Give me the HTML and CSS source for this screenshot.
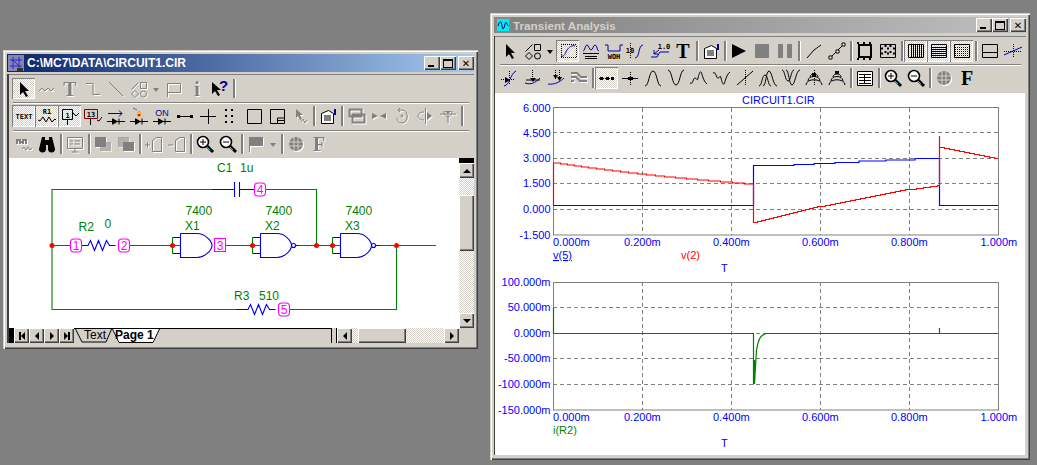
FILE: index.html
```html
<!DOCTYPE html>
<html lang="en">
<head>
<meta charset="utf-8">
<title>Micro-Cap</title>
<link rel="stylesheet" href="styles.css">
</head>
<body>
<svg class="defs" aria-hidden="true">
  <defs>
    <symbol id="arrow" viewBox="0 0 20 20"><path class="solid" d="M6 3v13l3-3 3 5 2-1-3-5h4z"/></symbol>
    <symbol id="shapes" viewBox="0 0 20 20"><path d="M2.500 10.500l7-7M2.500 15l3.500-3.500 3.500 3.500-3.500 3.500zM11.500 3.500h6v6h-6z"/><circle cx="14.500" cy="15" r="3"/></symbol>
    <symbol id="zoomin" viewBox="0 0 20 20"><path class="thick" d="M12 12l6 6"/><circle cx="8" cy="8" r="5.500" class="mid2" fill="#fff"/><path d="M5 8h6M8 5v6"/><path stroke="#0cc" d="M12 13l3 3"/></symbol>
    <symbol id="zoomout" viewBox="0 0 20 20"><path class="thick" d="M12 12l6 6"/><circle cx="8" cy="8" r="5.500" class="mid2" fill="#fff"/><path d="M5 8h6"/><path stroke="#0cc" d="M12 13l3 3"/></symbol>
    <symbol id="globe" viewBox="0 0 20 20"><circle cx="10" cy="10" r="7" class="solid"/><path stroke="#d4d0c8" d="M3 8h14M3 12h14M8 3v14M12 3v14"/></symbol>
    <symbol id="diode" viewBox="0 0 20 20"><path d="M1 15.500h18M6.500 12.500v6M13 12.500v6"/><path class="solid" d="M7 12.500l5 3-5 3z"/></symbol>
  </defs>
</svg>

<section class="win win-schem">
  <header class="title title-on">
    <svg class="tico" viewBox="0 0 16 16"><rect width="16" height="16" fill="#8a86a8"/><path stroke="#22f" fill="none" d="M2 5h12M5 2v12M11 2v12M2 11h12M5 5l6 6"/><rect x="9" y="13" width="6" height="3" fill="#333"/></svg>
    <span class="ttext">C:\MC7\DATA\CIRCUIT1.CIR</span>
    <span class="caps">
      <span class="cap"><i class="c-min"></i></span><span class="cap"><i class="c-max"></i></span><span class="cap cap-x">✕</span>
    </span>
  </header>
  <div class="client">
    <div class="toolbar">
      <div class="row row-first">
        <span class="btn on"><svg class="ic"><use href="#arrow"/></svg></span>
        <span class="btn off"><svg class="ic" viewBox="0 0 20 20"><path d="M2 12l3-3 3 3 3-3 3 3 3-3"/></svg></span>
        <span class="btn off"><svg class="ic" viewBox="0 0 20 20"><text x="10" y="17" class="bigT">T</text></svg></span>
        <span class="btn off"><svg class="ic" viewBox="0 0 20 20"><path d="M3 4.500h7v11h7"/></svg></span>
        <span class="btn off"><svg class="ic" viewBox="0 0 20 20"><path d="M3 3l14 14"/></svg></span>
        <span class="btn off"><svg class="ic"><use href="#shapes"/></svg></span>
        <span class="dd off"></span>
        <span class="btn off"><svg class="ic" viewBox="0 0 20 20"><path d="M3.500 18V4.500h13v9h-13"/></svg></span>
        <span class="btn off"><svg class="ic" viewBox="0 0 20 20"><text x="10" y="17" class="bigT">i</text></svg></span>
        <span class="btn"><svg class="ic" viewBox="0 0 20 20"><path class="solid" d="M2 3v12l3-3 3 5 2-1-3-5h4z"/><text x="9" y="12" class="help">?</text></svg></span>
        <span class="sep"></span>
      </div>
      <div class="rule"></div>
      <div class="row">
        <span class="btn on"><svg class="ic" viewBox="0 0 20 20"><text x="10" y="13" class="tiny">TEXT</text></svg></span>
        <span class="btn on"><svg class="ic" viewBox="0 0 20 20"><text x="10" y="8" class="tiny">R1</text><path d="M1 14l2 1 3-4 3 5 3-5 3 5 3-3 1 1"/></svg></span>
        <span class="btn on"><svg class="ic" viewBox="0 0 20 20"><path d="M2.500 3.500h10v10h-10zM7.500 14v5M13 7l3 3 3-3"/><text x="7.500" y="12" class="tiny">1</text></svg></span>
        <span class="btn"><svg class="ic" viewBox="0 0 20 20"><path stroke="#800000" d="M1.500 3.500h13v9h-13z"/><path d="M7.500 13v6M14 14l2 1 3-4"/><text x="8" y="11" class="tiny">13</text></svg></span>
        <span class="btn"><svg class="ic" viewBox="0 0 20 20"><path stroke="#008" d="M2 7.500h14M13 4.500l3 3-3 3"/><use href="#diode" width="20" height="20"/></svg></span>
        <span class="btn"><svg class="ic" viewBox="0 0 20 20"><use href="#diode" width="20" height="20"/><path fill="#ff0" stroke="#f80" d="M10 5c-3 4-1 6 0 6s3-2 0-6z"/><rect x="9" y="8" width="2" height="2" fill="#f00" stroke="none"/><path stroke="#666" d="M4 2l4 2"/></svg></span>
        <span class="btn"><svg class="ic" viewBox="0 0 20 20"><text x="10" y="10" class="on-t">ON</text><use href="#diode" width="20" height="20"/></svg></span>
        <span class="btn"><svg class="ic" viewBox="0 0 20 20"><path d="M3 10.500h14"/><path class="solid" d="M2 9h3v3H2zM15 9h3v3h-3z"/></svg></span>
        <span class="btn"><svg class="ic" viewBox="0 0 20 20"><path d="M2 10.500h16M10.500 3v15"/></svg></span>
        <span class="btn"><svg class="ic" viewBox="0 0 20 20"><path class="dots" d="M4 4h12M4 10h12M4 16h12"/></svg></span>
        <span class="btn"><svg class="ic" viewBox="0 0 20 20"><path d="M3.500 3.500h14v14h-14z"/></svg></span>
        <span class="btn"><svg class="ic" viewBox="0 0 20 20"><path d="M3.500 3.500h14v14h-14zM10.500 17v-5h7M10.500 14.500h7"/></svg></span>
        <span class="btn off"><svg class="ic" viewBox="0 0 20 20"><path class="solid" d="M6 3v9l2-2 2 4 2-1-2-4h3z"/><path d="M11 16l2-3 2 4 2-3"/></svg></span>
        <span class="sep"></span>
        <span class="btn"><svg class="ic" viewBox="0 0 20 20"><path fill="#fff" d="M3.500 7.500l7-3 5 3v10h-12z"/><path d="M6 10h7M6 12h7M6 14h7"/><path stroke="#008" class="mid" d="M17 3v6"/></svg></span>
        <span class="sep"></span>
        <span class="btn off"><svg class="ic" viewBox="0 0 20 20"><path class="mid" d="M3.500 3.500h12v7h-12zM6.500 8.500h12v8h-12z"/></svg></span>
        <span class="btn off"><svg class="ic" viewBox="0 0 20 20"><path class="solid" d="M3 7l6 3-6 3zM17 7l-6 3 6 3z"/></svg></span>
        <span class="btn off"><svg class="ic" viewBox="0 0 20 20"><path d="M6 4h4c7 0 7 13 0 13-4 0-5-3-5-5M8 2L6 4l2 2"/><circle cx="10" cy="10" r="1"/></svg></span>
        <span class="btn off"><svg class="ic" viewBox="0 0 20 20"><path d="M10.500 2v16M9 6c-8 0-8 8 0 8"/><path class="solid" d="M12 6l5 4-5 4z"/></svg></span>
        <span class="btn off"><svg class="ic" viewBox="0 0 20 20"><path d="M2 8h16M6 5c0 8 8 8 8 0M10 8v9"/><path class="solid" d="M7 5h6l-3 3z"/></svg></span>
        <span class="sep"></span>
      </div>
      <div class="rule"></div>
      <div class="row">
        <span class="btn off"><svg class="ic" viewBox="0 0 20 20"><path class="mid" d="M3 10V6h3v4M9 10V6h3v4M6 8h3"/><path d="M8 15l2-2 2 3 2-3 2 3 2-2"/></svg></span>
        <span class="btn"><svg class="ic" viewBox="0 0 20 20"><path class="solid" d="M5 3h3v3h4V3h3l3 12a3 3 0 0 1-7 0v-4H9v4a3 3 0 0 1-7 0z"/></svg></span>
        <span class="sep"></span>
        <span class="btn off"><svg class="ic" viewBox="0 0 20 20"><path d="M2.500 3.500h15v11h-15zM7 18h6M10 15v3M5 7h3M10 7h5M5 10h3M10 10h5"/></svg></span>
        <span class="sep"></span>
        <span class="btn off"><svg class="ic" viewBox="0 0 20 20"><path class="solid" d="M2 3h11v10H2z"/><path class="solid lt" d="M7 8h11v9H7z"/></svg></span>
        <span class="btn off"><svg class="ic" viewBox="0 0 20 20"><path class="solid lt" d="M2 3h11v10H2z"/><path class="solid" d="M7 8h11v9H7z"/></svg></span>
        <span class="sep"></span>
        <span class="btn off"><svg class="ic" viewBox="0 0 20 20"><path d="M1 11h5M3.500 8.500v5M8.500 17.500v-11l4-3h5v14z"/></svg></span>
        <span class="btn off"><svg class="ic" viewBox="0 0 20 20"><path d="M1 11h5M8.500 17.500v-11l4-3h5v14z"/></svg></span>
        <span class="sep"></span>
        <span class="btn"><svg class="ic"><use href="#zoomin"/></svg></span>
        <span class="btn"><svg class="ic"><use href="#zoomout"/></svg></span>
        <span class="sep"></span>
        <span class="btn off"><svg class="ic" viewBox="0 0 20 20"><path class="solid" d="M3 3h14v9H3z"/><path d="M3.500 3v15"/></svg></span>
        <span class="dd off"></span>
        <span class="sep"></span>
        <span class="btn off"><svg class="ic"><use href="#globe"/></svg></span>
        <span class="btn off"><svg class="ic" viewBox="0 0 20 20"><text x="10" y="17" class="bigT">F</text></svg></span>
      </div>
    </div>
    <div class="work">
      <svg class="canvas schem" viewBox="9 158 450 170">
        <g class="wire">
          <path d="M212 189.500H52V309.500H236M265 189.500H316.500V245.500M52 245.500H70M130 245.500H180M226 245.500H260M299 245.500H340M380 245.500H436M290 309.500H396.500V245.500"/>
          <path d="M172.500 237.500V253.500M252.500 237.500V253.500M332.500 237.500V253.500"/>
        </g>
        <g class="part">
          <path d="M212 189.500H234.500M234.500 182V197M239.500 182V197M239.500 189.500H254"/>
          <path d="M82 245.500H88l2.500-5 4 10 4-10 4 10 4-10 3 5h6"/>
          <path d="M236 309.500H248l2.500-5 4 10 4-10 4 10 4-10 3 5h6"/>
          <path d="M172.500 237.500H180M172.500 253.500H180M180.500 233.500V257.500H197C205 257.500 212 250 212 245.500 212 241 205 233.500 197 233.500H180.500"/>
          <path d="M252.500 237.500H260M252.500 253.500H260M260.500 233.500V257.500H277C285 257.500 291.500 250 291.500 245.500 291.500 241 285 233.500 277 233.500H260.500M295.500 245.500H299"/>
          <circle cx="293.500" cy="245.500" r="2"/>
          <path d="M332.500 237.500H340M332.500 253.500H340M340.500 233.500V257.500H357C365 257.500 371.500 250 371.500 245.500 371.500 241 365 233.500 357 233.500H340.500M375.500 245.500H380"/>
          <circle cx="373.500" cy="245.500" r="2"/>
        </g>
        <g class="dot">
          <circle cx="52" cy="245.500" r="2.500"/><circle cx="172.500" cy="245.500" r="2.500"/><circle cx="252.500" cy="245.500" r="2.500"/><circle cx="316.500" cy="245.500" r="2.500"/><circle cx="332.500" cy="245.500" r="2.500"/><circle cx="396.500" cy="245.500" r="2.500"/>
        </g>
        <g class="node">
          <rect x="70.500" y="239" width="11" height="13" rx="3.500"/><rect x="118.500" y="239" width="11" height="13" rx="3.500"/><rect x="214.500" y="238.500" width="11" height="13"/><rect x="254.500" y="183" width="11" height="13" rx="3.500"/><rect x="278.500" y="303" width="11" height="13" rx="3.500"/>
          <text x="76" y="250">1</text><text x="124" y="250">2</text><text x="220" y="250">3</text><text x="260" y="194">4</text><text x="284" y="314">5</text>
        </g>
        <g class="lab">
          <text x="217" y="172">C1</text><text x="240" y="172">1u</text>
          <text x="78.500" y="231">R2</text><text x="104.500" y="228">0</text>
          <text x="185.500" y="215">7400</text><text x="185" y="230">X1</text>
          <text x="265.500" y="215">7400</text><text x="265" y="230">X2</text>
          <text x="345.500" y="215">7400</text><text x="345" y="230">X3</text>
          <text x="234" y="300">R3</text><text x="259" y="300">510</text>
        </g>
      </svg>
      <div class="vbar">
        <div class="vcap"></div>
        <span class="sb-btn"><i class="tri tri-up"></i></span>
        <div class="track t1"></div>
        <div class="thumb th-v"></div>
        <div class="track grow"></div>
        <span class="sb-btn"><i class="tri tri-dn"></i></span>
      </div>
    </div>
    <div class="tabbar">
      <span class="blk"></span>
      <span class="nav"><i class="bar"></i><i class="tri tri-lt"></i></span>
      <span class="nav"><i class="tri tri-lt"></i></span>
      <span class="nav"><i class="tri tri-rt"></i></span>
      <span class="nav"><i class="tri tri-rt"></i><i class="bar"></i></span>
      <svg class="tabs" viewBox="0 0 100 15">
        <path class="tab-w" d="M38 0L45 14.500H79L86 0z"/>
        <path class="tab-l" d="M1 0L8 14H32L38 0"/>
        <text x="10" y="11" class="tab-t">Text</text>
        <text x="41" y="11" class="tab-b">Page 1</text>
        <path class="tab-l" d="M0 .5H100"/>
      </svg>
      <span class="tabfill"></span>
      <span class="split"></span>
      <span class="sb-btn"><i class="tri tri-lt"></i></span>
      <span class="track t2"></span>
      <span class="thumb th-h"></span>
      <span class="track grow"></span>
      <span class="sb-btn"><i class="tri tri-rt"></i></span>
      <span class="corner"></span>
    </div>
  </div>
</section>

<section class="win win-plot">
  <header class="title title-off">
    <svg class="tico" viewBox="0 0 16 16"><rect width="16" height="16" fill="#888"/><rect x="2" y="2" width="12" height="12" fill="#0ee"/><path stroke="#008" fill="none" d="M3 9c2-6 3-6 4 0s2 2 3-2 2 0 3 2"/></svg>
    <span class="ttext">Transient Analysis</span>
    <span class="caps">
      <span class="cap"><i class="c-min"></i></span><span class="cap"><i class="c-max"></i></span><span class="cap cap-x">✕</span>
    </span>
  </header>
  <div class="client client-plot">
    <div class="toolbar tb-plot">
      <div class="row">
        <span class="btn"><svg class="ic"><use href="#arrow"/></svg></span>
        <span class="btn"><svg class="ic"><use href="#shapes"/></svg></span>
        <span class="dd"></span>
        <span class="btn on"><svg class="ic" viewBox="0 0 20 20"><path class="dash" d="M3 3.500h15v13H3z"/><path stroke="#00a" d="M3 15c4 1 4-3 6-6s5-5 8-4"/></svg></span>
        <span class="btn"><svg class="ic" viewBox="0 0 20 20"><path stroke="#00a" d="M2 10c2 0 2-6 4-6s2 5 4 5 2-5 4-5 2 6 4 6"/><path d="M2 12.500h16M4 15.500h12M4 17.500h12"/></svg></span>
        <span class="btn"><svg class="ic" viewBox="0 0 20 20"><path stroke="#00a" d="M1 4h3v6h12V4h3"/><text x="10" y="18" class="tiny">WOH</text></svg></span>
        <span class="btn"><svg class="ic" viewBox="0 0 20 20"><path stroke="#00a" d="M8 17c5 0 3-13 8-13"/><path class="dash" d="M3.500 2v16"/><text x="3" y="12" class="tiny">10</text></svg></span>
        <span class="btn"><svg class="ic" viewBox="0 0 20 20"><path stroke="#00a" d="M1 16h6l3-5h9"/><path stroke="#00a" d="M4 13l5-4M4 9v4h4"/><text x="14" y="8" class="tiny">1.0</text></svg></span>
        <span class="btn"><svg class="ic" viewBox="0 0 20 20"><text x="10" y="17" class="bigT">T</text></svg></span>
        <span class="sep"></span>
        <span class="btn"><svg class="ic" viewBox="0 0 20 20"><path fill="#fff" d="M3.500 7.500l7-3 5 3v10h-12z"/><path d="M6 10h7M6 12h7M6 14h7"/><path stroke="#008" class="mid" d="M17 3v6"/></svg></span>
        <span class="sep"></span>
        <span class="btn"><svg class="ic" viewBox="0 0 20 20"><path class="solid" d="M3 3l14 7-14 7z"/></svg></span>
        <span class="btn dim"><svg class="ic" viewBox="0 0 20 20"><rect x="3" y="3" width="14" height="14" class="dimfill"/></svg></span>
        <span class="btn dim"><svg class="ic" viewBox="0 0 20 20"><path class="dimfill" d="M3 3h5v14H3zM12 3h5v14h-5z"/></svg></span>
        <span class="sep sep-w"></span>
        <span class="btn"><svg class="ic" viewBox="0 0 20 20"><path d="M3 17L10 9l7-5"/></svg></span>
        <span class="btn"><svg class="ic" viewBox="0 0 20 20"><path d="M3 17L10 10l7-7"/><path fill="#fff" d="M2 15h3v3H2zM9 9h3v3H9zM15 2h3v3h-3z"/></svg></span>
        <span class="sep"></span>
        <span class="btn"><svg class="ic" viewBox="0 0 20 20"><path class="mid" d="M4 4h12v12H4z"/><path class="dots" d="M2 2h16M2 18h16"/></svg></span>
        <span class="btn"><svg class="ic" viewBox="0 0 20 20"><path d="M2.500 3.500h15v13h-15z"/><path class="dots" d="M3 7.500h14M3 12.500h14M7.500 4v12M12.500 4v12"/></svg></span>
        <span class="sep"></span>
        <span class="btn on"><svg class="ic" viewBox="0 0 20 20"><path d="M2.500 3.500h15v13h-15zM5.500 4v12M7.500 4v12M9.500 4v12M11.500 4v12M13.500 4v12M15.500 4v12"/></svg></span>
        <span class="btn on"><svg class="ic" viewBox="0 0 20 20"><path d="M2.500 3.500h15v13h-15zM3 6.500h14M3 8.500h14M3 10.500h14M3 12.500h14M3 14.500h14"/></svg></span>
        <span class="btn on"><svg class="ic" viewBox="0 0 20 20"><path d="M2.500 3.500h15v13h-15z"/><path class="dash" d="M3 6h14M3 8h14M3 10h14M3 12h14M3 14h14"/></svg></span>
        <span class="sep"></span>
        <span class="btn"><svg class="ic" viewBox="0 0 20 20"><path d="M2.500 3.500h15v13h-15zM3 11.500h14"/></svg></span>
        <span class="btn"><svg class="ic" viewBox="0 0 20 20"><path stroke="#00a" d="M1 14l18-8"/><path class="dash" d="M1 10.500h18M10.500 3v14"/></svg></span>
      </div>
      <div class="rule"></div>
      <div class="row">
        <span class="btn"><svg class="ic" viewBox="0 0 20 20"><path class="dash" d="M1 11.500h13M9.500 3v14"/><path stroke="#00a" d="M4 18c6-1 6-12 12-15"/><path class="solid" d="M5 9l5 3-5 3z"/></svg></span>
        <span class="btn"><svg class="ic" viewBox="0 0 20 20"><path class="dash" d="M9.500 2v8"/><path stroke="#00a" d="M2 15c6 2 10 0 15-5"/><path d="M3 12h14"/><path class="solid" d="M7 10h6l-3 4z"/></svg></span>
        <span class="btn"><svg class="ic" viewBox="0 0 20 20"><path class="dash" d="M9.500 2v9M13.500 2v9"/><path stroke="#00a" d="M2 16c6 1 12-2 16-6"/><path class="solid" d="M7 7h5l-2.500 4zM11 9h5l-2.500 4z"/></svg></span>
        <span class="btn off"><svg class="ic" viewBox="0 0 20 20"><path class="mid" d="M2 5h6l4 4h6M2 9h5l4 4h7M2 13h3"/></svg></span>
        <span class="sep"></span>
        <span class="btn on"><svg class="ic" viewBox="0 0 20 20"><path class="dash" d="M2 10.500h16"/><path class="solid" d="M3 9h3v3H3zM9 9h3v3H9zM14 9h3v3h-3z"/></svg></span>
        <span class="btn"><svg class="ic" viewBox="0 0 20 20"><path d="M2 10.500h16"/><path class="dash" d="M10.500 4v14"/><path class="solid" d="M8 9h5v3H8z"/></svg></span>
        <span class="btn"><svg class="ic" viewBox="0 0 20 20"><path d="M2 18C6 18 6 3 10 3s4 15 8 15"/></svg></span>
        <span class="btn"><svg class="ic" viewBox="0 0 20 20"><path d="M2 2C6 2 6 17 10 17s4-15 8-15"/></svg></span>
        <span class="btn"><svg class="ic" viewBox="0 0 20 20"><path d="M1 15c3 2 3-5 5-5s2 4 3 0 2-7 3-6 2 9 6 12"/></svg></span>
        <span class="btn"><svg class="ic" viewBox="0 0 20 20"><path d="M1 5c3-2 3 5 5 5s2-4 3 0 2 7 3 6 2-9 6-12"/></svg></span>
        <span class="btn"><svg class="ic" viewBox="0 0 20 20"><path class="dash" d="M10.500 2v16"/><path d="M2 17L18 3"/></svg></span>
        <span class="btn"><svg class="ic" viewBox="0 0 20 20"><path d="M1 18C4 18 4 7 7 7s3 11 6 11M5 18C8 18 8 3 11 3s4 15 8 15"/></svg></span>
        <span class="btn"><svg class="ic" viewBox="0 0 20 20"><path d="M1 2C4 2 4 13 7 13s3-11 6-11M5 2C8 2 8 17 11 17s4-15 8-15"/></svg></span>
        <span class="btn"><svg class="ic" viewBox="0 0 20 20"><path d="M2 17C2 10 18 10 18 17M4 13C4 7 16 7 16 13M6 9c0-4 8-4 8 0"/><path class="solid" d="M8 5h4v4H8z"/><path class="dash" d="M10.500 2v16"/></svg></span>
        <span class="btn"><svg class="ic" viewBox="0 0 20 20"><path d="M2 17C2 10 18 10 18 17M4 13C4 7 16 7 16 13M6 9c0-4 8-4 8 0"/><path class="solid" d="M8 3h4v3H8z"/></svg></span>
        <span class="sep"></span>
        <span class="btn"><svg class="ic" viewBox="0 0 20 20"><path fill="#fff" d="M2.500 3.500h15v14h-15z"/><path d="M4 6.500h12M4 9.500h12M4 12.500h12M4 15.500h12M9.500 6v10"/></svg></span>
        <span class="sep"></span>
        <span class="btn"><svg class="ic"><use href="#zoomin"/></svg></span>
        <span class="btn"><svg class="ic"><use href="#zoomout"/></svg></span>
        <span class="sep"></span>
        <span class="btn off"><svg class="ic"><use href="#globe"/></svg></span>
        <span class="btn"><svg class="ic" viewBox="0 0 20 20"><text x="10" y="17" class="bigT">F</text></svg></span>
      </div>
    </div>
    <svg class="canvas plot" viewBox="495 93 530 362">
      <g class="grid">
        <path d="M642.500 108V235M731.500 108V235M820.500 108V235M909.500 108V235M553 132.500H998M553 158.500H998M553 183.500H998M553 209.500H998"/>
        <path d="M642.500 282V410M731.500 282V410M820.500 282V410M909.500 282V410M553 307.500H998M553 333.500H998M553 358.500H998M553 384.500H998"/>
      </g>
      <g class="frame">
        <rect x="553.500" y="107.500" width="445" height="127.500"/>
        <rect x="553.500" y="282.500" width="445" height="127.500"/>
      </g>
      <path class="tr-b" d="M553 205.500H753.500V165.500H794V164.500H814V163.500H835V162.500H859V161H886V160H915V158.500H939.500V205.500H998"/>
      <path class="tr-r" d="M553.500 205.500V163h7v1h7v1h7v1h7v1h7v1h8v1h8v1h8v1h8v1h8v1h9v1h9v1h9v1h9v1h11v1h11v1h11v1h11v1h12v1h12v1h12v1H753.500V222.500h4v-1h4v-1h4v-1h4v-1h4v-1h4v-1h4v-1h4v-1h4v-1h4v-1h4v-1h4v-1h4v-1h4v-1h4v-1h4v-1H820.500h5v-1h5v-1h5v-1h5v-1h5v-1h5v-1h5v-1h5v-1h5v-1h5v-1h5v-1h5v-1h5v-1h5v-1h5v-1h5v-1h5v-1H909.500h7v-1h7v-1h7v-1h7v-1H939.500V136V147.500h5v1h5v1h5v1h5v1h5v1h5v1h5v1h5v1h5v1h5v1h5v1H998"/>
      <path class="tr-g" d="M553.500 308V333.500H753.500V384.500L754.500 360V384L755.500 366 756.500 350 758 343 759.500 339 761 336.500 763 335 766 333.500H939.500V328V333.500H998"/>
      <g class="ax ax-r">
        <text x="550.500" y="111.500">6.000</text><text x="550.500" y="136.500">4.500</text><text x="550.500" y="162">3.000</text><text x="550.500" y="187">1.500</text><text x="550.500" y="213">0.000</text><text x="550.500" y="239">-1.500</text>
        <text x="550.500" y="286">100.000m</text><text x="550.500" y="311">50.000m</text><text x="550.500" y="337">0.000m</text><text x="550.500" y="362">-50.000m</text><text x="550.500" y="388">-100.000m</text><text x="550.500" y="414">-150.000m</text>
      </g>
      <g class="ax">
        <text x="553" y="245.500">0.000m</text><text x="624" y="245.500">0.200m</text><text x="713" y="245.500">0.400m</text><text x="802" y="245.500">0.600m</text><text x="891" y="245.500">0.800m</text><text x="980.500" y="245.500">1.000m</text>
        <text x="553" y="420.500">0.000m</text><text x="624" y="420.500">0.200m</text><text x="713" y="420.500">0.400m</text><text x="802" y="420.500">0.600m</text><text x="891" y="420.500">0.800m</text><text x="980.500" y="420.500">1.000m</text>
        <text x="742" y="104">CIRCUIT1.CIR</text>
        <text x="721" y="272">T</text><text x="721" y="447">T</text>
        <text x="553" y="259" class="under">v(5)</text>
        <text x="681" y="259" class="red">v(2)</text>
        <text x="553" y="434" class="green">i(R2)</text>
      </g>
    </svg>
  </div>
</section>
</body>
</html>
```
FILE: styles.css
```css
* { box-sizing: border-box; }
html, body { margin: 0; height: 100%; overflow: hidden; }
body { background: #808080; font-family: "Liberation Sans", Arial, sans-serif; }
.defs { position: absolute; width: 0; height: 0; }

/* windows sit on a free desktop */
.win {
  position: absolute;
  background: #d4d0c8;
  padding: 4px 4px 5px;
  box-shadow: inset 1px 1px 0 #d4d0c8, inset 2px 2px 0 #fff, inset -1px -1px 0 #404040, inset -2px -2px 0 #808080;
}
.win-schem { left: 3px; top: 50px; width: 475px; height: 299px; }
.win-plot { left: 490px; top: 13px; width: 540px; height: 447px; padding-bottom: 4px; }

.title { display: flex; align-items: center; color: #fff; font-weight: 700; font-size: 12px; padding-left: 1px; }
.title-on { height: 18px; background: linear-gradient(90deg, #0a246a, #a6caf0); }
.title-off { height: 16px; margin-top: 0; background: linear-gradient(90deg, #808080, #c0c0c0); color: #d4d0c8; font-size: 11.700px; }
.tico { width: 16px; height: 16px; flex: none; margin-right: 3px; }
.title-off .tico { margin-right: 2px; }
.ttext { flex: 1; white-space: nowrap; }
.caps { display: flex; padding-top: 0; }
.cap {
  width: 16px; height: 14px; background: #d4d0c8; position: relative;
  box-shadow: inset 1px 1px 0 #fff, inset -1px -1px 0 #404040, inset -2px -2px 0 #808080;
  display: flex; align-items: center; justify-content: center;
}
.cap-x { margin-left: 2px; color: #000; font: 700 10px "DejaVu Sans", sans-serif; }
.c-min { position: absolute; left: 4px; bottom: 3px; width: 6px; height: 2px; background: #000; }
.c-max { width: 10px; height: 9px; border: 1px solid #000; border-top-width: 2px; }

.client { display: flex; flex-direction: column; margin-top: 2px; border-left: 2px solid #404040; }
.client-plot { margin-top: 3px; border-left-width: 1px; height: 419px; }
.toolbar { height: 84px; border-top: 1px solid #808080; padding: 3px 0 0 3px; flex: none; }
.tb-plot { height: 57px; padding-left: 3px; padding-top: 3px; }

.row { display: flex; height: 22px; }
.row-first { height: 21px; }
.rule { height: 2px; margin: 3px 5px 1px 1px; background: #808080; border-bottom: 1px solid #fff; }
.tb-plot .rule { margin: 2px 5px 1px 2px; }

.btn { width: 23px; height: 100%; display: flex; align-items: center; justify-content: center; flex: none; }
.btn.on {
  background: repeating-conic-gradient(#fff 0 25%, #d4d0c8 0 50%) 0 0 / 2px 2px;
  box-shadow: inset 1px 1px 0 #808080, inset -1px -1px 0 #fff;
}
.sep { width: 5px; flex: none; position: relative; }
.sep::after { content: ""; position: absolute; left: 2px; top: 1px; bottom: 1px; width: 2px; background: #808080; border-right: 1px solid #fff; }
.sep-w { width: 6px; }
.dd { width: 12px; flex: none; position: relative; }
.dd::after { content: ""; position: absolute; left: 3px; top: 10px; border: 3px solid transparent; border-top: 4px solid #000; }
.dd.off::after { border-top-color: #808080; }

.ic { --ink: #000; width: 20px; height: 20px; overflow: visible; fill: none; stroke: #000; stroke-width: 1; color: #000; }
.off .ic { --ink: #808080; filter: drop-shadow(1px 1px 0 #fff); stroke: #808080; }
.solid { fill: var(--ink); stroke: none; }
.lt { opacity: .55; }
.mid { stroke-width: 2; }
.mid2 { stroke-width: 1.600; }
.thick { stroke-width: 3; }
.dash { stroke-dasharray: 1 1; shape-rendering: crispEdges; }
.dots { stroke-width: 2; stroke-dasharray: 2 4; }
.dimfill { fill: #808080; stroke: none; }
.ic text { stroke: none; fill: var(--ink); text-anchor: middle; }
.bigT { font: 700 20px "Liberation Serif", serif; }
.tiny { font: 700 7px "DejaVu Sans Mono", monospace; }
.on-t { font: 400 9px "Liberation Sans", sans-serif; }
.ic .on-t { fill: #008; }
.ic .help { fill: #008; font: 700 15px "Liberation Sans", sans-serif; text-anchor: start; }

.work { display: flex; height: 170px; flex: none; }
.canvas { display: block; background: #fff; }
.schem { width: 450px; height: 170px; flex: none; }
.plot { width: 530px; height: 362px; flex: none; }

.wire path { fill: none; stroke: #008000; stroke-width: 1.100; }
.part path, .part circle { fill: none; stroke: #0000e0; stroke-width: 1.100; }
.dot circle { fill: #f00; }
.node rect { fill: #fff; stroke: #f0f; stroke-width: 1.100; }
.node text { fill: #f0f; font-size: 12px; text-anchor: middle; }
.lab text { fill: #008000; font-size: 12px; }

.vbar { width: 15px; flex: none; display: flex; flex-direction: column; }
.vcap { height: 5px; background: #000; flex: none; }
.track { background: repeating-conic-gradient(#fff 0 25%, #d4d0c8 0 50%) 0 0 / 2px 2px; flex: none; }
.track.grow { flex: 1; }
.t1 { height: 17px; }
.t2 { width: 6px; }
.sb-btn, .nav, .thumb {
  background: #d4d0c8;
  box-shadow: inset 1px 1px 0 #fff, inset -1px -1px 0 #404040, inset -2px -2px 0 #808080;
  flex: none;
}
.sb-btn { width: 15px; height: 15px; display: flex; align-items: center; justify-content: center; }
.th-v { height: 56px; }
.th-h { width: 48px; height: 15px; }
.tri { display: block; width: 0; height: 0; border: 4px solid transparent; flex: none; }
.tri-up { border-top: 0; border-bottom-color: #000; }
.tri-dn { border-bottom: 0; border-top-color: #000; }
.tri-lt { border-left: 0; border-right-color: #000; }
.tri-rt { border-right: 0; border-left-color: #000; }

.tabbar { display: flex; height: 15px; flex: none; background: #d4d0c8; }
.blk { width: 5px; background: #000; flex: none; }
.nav { width: 15px; height: 15px; display: flex; align-items: center; justify-content: center; }
.bar { width: 2px; height: 8px; background: #000; flex: none; }
.tabs { width: 100px; height: 15px; flex: none; }
.tab-w { fill: #fff; stroke: #000; }
.tab-l { fill: none; stroke: #000; }
.tab-t { font-size: 12px; fill: #000; }
.tab-b { font-size: 12px; font-weight: 700; fill: #000; }
.tabfill { width: 157px; flex: none; border-top: 1px solid #000; }
.split { width: 6px; flex: none; border: solid #000; border-width: 0 1px; background: #d4d0c8; }
.corner { width: 15px; flex: none; }

.grid path { fill: none; stroke: #808080; stroke-dasharray: 4 3; }
.frame rect { fill: none; stroke: #808080; }
.tr-b, .tr-r, .tr-g { fill: none; stroke-width: 1.200; }
.tr-b { stroke: #0000ff; }
.tr-r { stroke: #ff0000; }
.tr-g { stroke: #008000; }
.ax text { fill: #0000ff; font-size: 11px; }
.ax-r text { text-anchor: end; }
.ax .under { text-decoration: underline; }
.ax .red { fill: #ff0000; }
.ax .green { fill: #008000; }
```
